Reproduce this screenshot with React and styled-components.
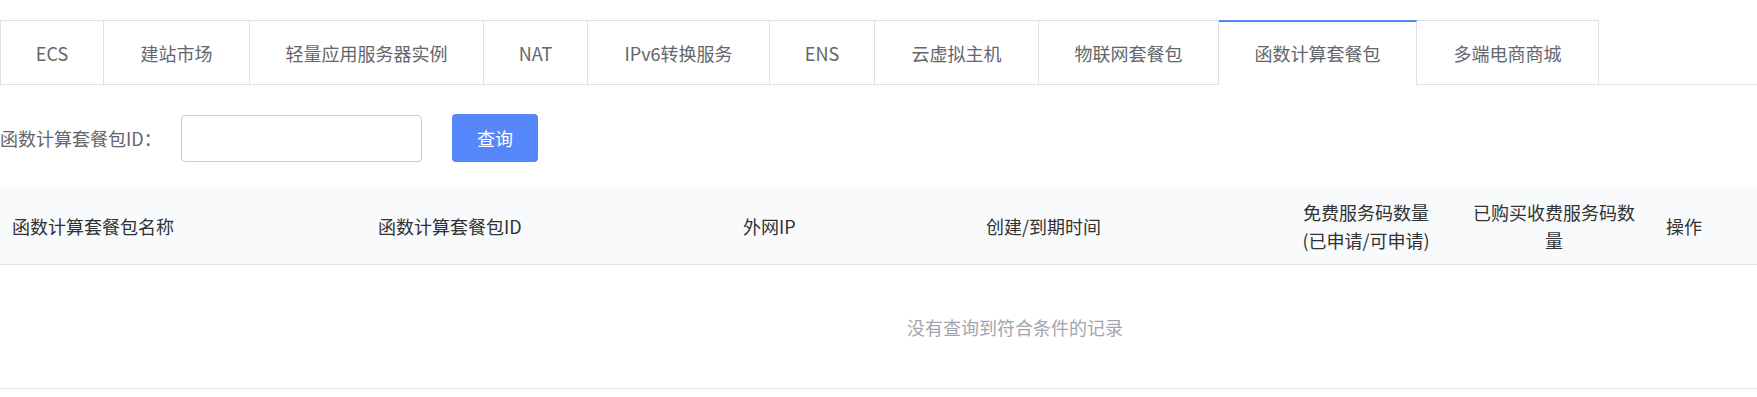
import React, { useState } from 'react'
import styled, { createGlobalStyle } from 'styled-components'

const GlobalStyle = createGlobalStyle`
  body {
    margin: 0;
    background: #fff;
    font-family: "Noto Sans CJK SC", "Noto Sans", sans-serif;
  }
`

const Page = styled.div`
  padding-top: 20px;
  width: 1757px;
`

const TabBar = styled.div`
  display: flex;
  height: 64px;
  border-bottom: 1px solid #e8e8ea;
`

const Tab = styled.div`
  box-sizing: border-box;
  width: ${p => p.$w}px;
  height: 65px;
  display: flex;
  align-items: center;
  justify-content: center;
  font-size: 18px;
  color: #63666b;
  cursor: pointer;
  background: #fff;
  border: 1px solid #dcdfe6;
  border-left: ${p => (p.$first ? '1px solid #dcdfe6' : 'none')};
  border-top: ${p => (p.$active ? '2px solid #4f86f8' : '1px solid #dcdfe6')};
  border-bottom-color: ${p => (p.$active ? '#fff' : '#dcdfe6')};
  padding-top: ${p => (p.$active ? '0' : '1px')};
`

const SearchRow = styled.div`
  display: flex;
  align-items: center;
  margin-top: 29px;
  height: 48px;
`

const Label = styled.label`
  width: 181px;
  font-size: 18px;
  color: #63666b;
  white-space: nowrap;
`

const Input = styled.input`
  box-sizing: border-box;
  width: 241px;
  height: 47px;
  border: 1px solid #c8c9d3;
  border-radius: 4px;
  padding: 0 12px;
  font-size: 16px;
  outline: none;
`

const QueryButton = styled.button`
  margin-left: 30px;
  width: 86px;
  height: 48px;
  border: none;
  border-radius: 4px;
  background: #5587fb;
  color: #fff;
  font-family: inherit;
  font-size: 18px;
  cursor: pointer;
`

const Table = styled.div`
  margin-top: 25px;
  border-bottom: 1px solid #e2e3e6;
`

const HeadRow = styled.div`
  display: grid;
  grid-template-columns: 366px 365px 243px 316px 152px 224px 1fr;
  align-items: center;
  height: 77px;
  background: #f9fafc;
  border-bottom: 1px solid #e2e3e6;
`

const HeadCell = styled.div`
  font-size: 18px;
  line-height: 28px;
  color: #303133;
  text-align: ${p => p.$align || 'left'};
  padding: ${p => p.$pad || '0 12px'};
`

const EmptyRow = styled.div`
  height: 123px;
  display: flex;
  align-items: center;
  justify-content: center;
  padding-left: 273px;
  font-size: 18px;
  color: #a2a5ad;
`

const tabs = [
  ['ECS', 104],
  ['建站市场', 146],
  ['轻量应用服务器实例', 234],
  ['NAT', 104],
  ['IPv6转换服务', 182],
  ['ENS', 105],
  ['云虚拟主机', 164],
  ['物联网套餐包', 180],
  ['函数计算套餐包', 198],
  ['多端电商商城', 182],
]

export default function App() {
  const [active, setActive] = useState(8)
  const [pkgId, setPkgId] = useState('')

  return (
    <Page>
      <GlobalStyle />
      <TabBar>
        {tabs.map(([name, w], i) => (
          <Tab key={name} $w={w} $first={i === 0} $active={i === active} onClick={() => setActive(i)}>
            {name}
          </Tab>
        ))}
      </TabBar>

      <SearchRow>
        <Label>函数计算套餐包ID：</Label>
        <Input value={pkgId} onChange={e => setPkgId(e.target.value)} />
        <QueryButton>查询</QueryButton>
      </SearchRow>

      <Table>
        <HeadRow>
          <HeadCell>函数计算套餐包名称</HeadCell>
          <HeadCell>函数计算套餐包ID</HeadCell>
          <HeadCell>外网IP</HeadCell>
          <HeadCell>创建/到期时间</HeadCell>
          <HeadCell $align="center" $pad="0">
            免费服务码数量
            <br />
            (已申请/可申请)
          </HeadCell>
          <HeadCell $align="center" $pad="0 24px">已购买收费服务码数量</HeadCell>
          <HeadCell $pad="0">操作</HeadCell>
        </HeadRow>
        <EmptyRow>没有查询到符合条件的记录</EmptyRow>
      </Table>
    </Page>
  )
}
